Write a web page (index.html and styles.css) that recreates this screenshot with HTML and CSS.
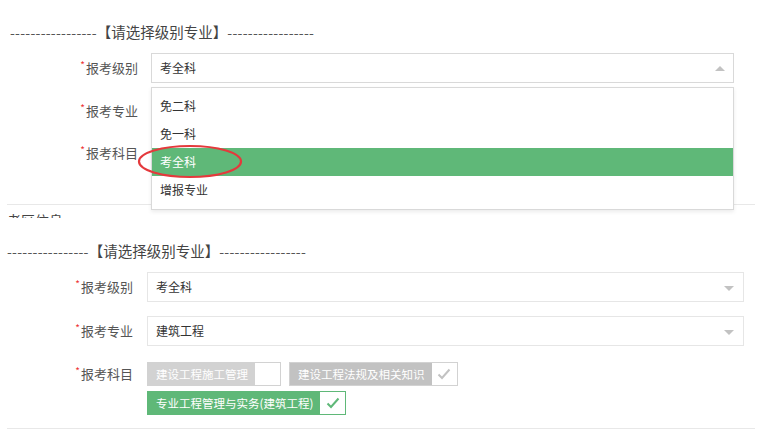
FILE: index.html
```html
<!DOCTYPE html>
<html lang="zh-CN">
<head>
<meta charset="utf-8">
<title>请选择级别专业</title>
<link rel="stylesheet" href="styles.css">
</head>
<body>
<section class="panel panel-top">
  <div class="heading"><span class="dashes">-----------------</span>【请选择级别专业】<span class="dashes">-----------------</span></div>
  <div class="form">
    <div class="row">
      <label class="label"><span class="req">*</span>报考级别</label>
      <div class="select open">
        <span class="value">考全科</span>
        <i class="arrow arrow-up"></i>
        <ul class="menu">
          <li class="option">免二科</li>
          <li class="option">免一科</li>
          <li class="option selected">考全科</li>
          <li class="option">增报专业</li>
          <svg class="mark" width="110" height="36" viewBox="0 0 110 36"><ellipse cx="54" cy="17.5" rx="51" ry="15.5" fill="none" stroke="#e4393c" stroke-width="2.2"/></svg>
        </ul>
      </div>
    </div>
    <div class="row">
      <label class="label"><span class="req">*</span>报考专业</label>
      <div class="select"><span class="value">建筑工程</span><i class="arrow arrow-down"></i></div>
    </div>
    <div class="row row-check">
      <label class="label"><span class="req">*</span>报考科目</label>
      <div class="checks">
        <div class="check-line">
          <div class="cb cb-off"><span class="cb-text">建设工程施工管理</span><span class="cb-box"></span></div>
          <div class="cb cb-dis"><span class="cb-text">建设工程法规及相关知识</span><span class="cb-box"><svg width="14" height="12" viewBox="0 0 14 12"><polyline points="1.5,6.5 5,10 12.5,1.5" fill="none" stroke="currentColor" stroke-width="2"/></svg></span></div>
        </div>
        <div class="check-line">
          <div class="cb cb-on"><span class="cb-text">专业工程管理与实务(建筑工程)</span><span class="cb-box"><svg width="14" height="12" viewBox="0 0 14 12"><polyline points="1.5,6.5 5,10 12.5,1.5" fill="none" stroke="currentColor" stroke-width="2"/></svg></span></div>
        </div>
      </div>
    </div>
  </div>
  <div class="rule"></div>
  <div class="next-title">考区信息</div>
</section>

<section class="panel panel-bottom">
  <div class="heading"><span class="dashes">----------------</span>【请选择级别专业】<span class="dashes">-----------------</span></div>
  <div class="form">
    <div class="row">
      <label class="label"><span class="req">*</span>报考级别</label>
      <div class="select"><span class="value">考全科</span><i class="arrow arrow-down"></i></div>
    </div>
    <div class="row">
      <label class="label"><span class="req">*</span>报考专业</label>
      <div class="select"><span class="value">建筑工程</span><i class="arrow arrow-down"></i></div>
    </div>
    <div class="row row-check">
      <label class="label"><span class="req">*</span>报考科目</label>
      <div class="checks">
        <div class="check-line">
          <div class="cb cb-off"><span class="cb-text">建设工程施工管理</span><span class="cb-box"></span></div>
          <div class="cb cb-dis"><span class="cb-text">建设工程法规及相关知识</span><span class="cb-box"><svg width="14" height="12" viewBox="0 0 14 12"><polyline points="1.5,6.5 5,10 12.5,1.5" fill="none" stroke="currentColor" stroke-width="2"/></svg></span></div>
        </div>
        <div class="check-line">
          <div class="cb cb-on"><span class="cb-text">专业工程管理与实务(建筑工程)</span><span class="cb-box"><svg width="14" height="12" viewBox="0 0 14 12"><polyline points="1.5,6.5 5,10 12.5,1.5" fill="none" stroke="currentColor" stroke-width="2"/></svg></span></div>
        </div>
      </div>
    </div>
  </div>
  <div class="rule"></div>
</section>
</body>
</html>
```

FILE: styles.css
```css
* { box-sizing: border-box; }
html, body { margin: 0; padding: 0; background: #fff; }
body {
  width: 761px;
  height: 446px;
  overflow: hidden;
  font-family: "Noto Sans CJK SC", "Liberation Sans", sans-serif;
  color: #333;
}
ul { margin: 0; padding: 0; list-style: none; }

.panel { position: relative; }
.panel-top { height: 218px; overflow: hidden; padding-top: 22px; }
.panel-bottom { padding-top: 23px; }

.heading {
  height: 20px;
  font-size: 14.5px;
  line-height: 20px;
  color: #444;
  white-space: nowrap;
}
.panel-top .heading { padding-left: 10px; }
.panel-bottom .heading { padding-left: 7px; }
.dashes { font-size: 14px; letter-spacing: 0.25px; color: #555; }

.form { display: flex; flex-direction: column; margin-top: 11px; }
.panel-top .form { gap: 13px; }
.panel-bottom .form { gap: 14px; margin-top: 11px; }

.row { display: grid; align-items: start; }
.panel-top .row { grid-template-columns: 138px 583px; column-gap: 13px; }
.panel-bottom .row { grid-template-columns: 133px 597px; column-gap: 14px; }
.panel-top .row-check { margin-top: 2px; }
.panel-bottom .row-check { margin-top: 2px; }

.label {
  display: flex;
  justify-content: flex-end;
  align-items: center;
  height: 30px;
  font-size: 13px;
  line-height: 16px;
  color: #555;
  white-space: nowrap;
}
.row-check .label { height: 24px; }
.req {
  color: #e33;
  font-size: 10px;
  line-height: 10px;
  position: relative;
  top: -3px;
  margin-right: 1px;
}

.select {
  position: relative;
  height: 30px;
  border: 1px solid #e6e6e6;
  background: #fff;
  padding-left: 8px;
  font-size: 12px;
  line-height: 28px;
  color: #333;
}
.select.open { border-color: #d9d9d9; }
.arrow {
  position: absolute;
  right: 8px;
  width: 0;
  height: 0;
  border-left: 5px solid transparent;
  border-right: 5px solid transparent;
}
.arrow-up { top: 12px; border-bottom: 5px solid #c2c2c2; }
.arrow-down { top: 13px; border-top: 5px solid #c2c2c2; }
.panel-bottom .arrow { right: 9px; }

.menu {
  position: absolute;
  top: 33px;
  left: -1px;
  right: -1px;
  height: 123px;
  border: 1px solid #d9d9d9;
  background: #fff;
  padding: 4px 0 5px;
  box-shadow: 0 2px 4px rgba(0,0,0,0.08);
  z-index: 5;
}
.option {
  height: 28px;
  line-height: 28px;
  padding-left: 8px;
  font-size: 12px;
  color: #333;
}
.option.selected { background: #5fb878; color: #fff; }
.mark { position: absolute; left: -16px; top: 56px; overflow: visible; }

.checks { display: flex; flex-direction: column; gap: 5px; }
.check-line { display: flex; gap: 8px; }
.cb {
  display: inline-flex;
  height: 24px;
  border: 1px solid #d2d2d2;
  background: #fff;
}
.cb-text {
  padding: 0 7px 0 8px;
  font-size: 11.5px;
  line-height: 22px;
  color: #fff;
  white-space: nowrap;
}
.cb-box {
  width: 25px;
  display: flex;
  align-items: center;
  justify-content: center;
  background: #fff;
}
.cb-off .cb-text { background: #d2d2d2; }
.cb-dis .cb-text { background: #c2c2c2; }
.cb-dis .cb-box { color: #c2c2c2; }
.cb-on { border-color: #5fb878; }
.cb-on .cb-text { background: #5fb878; }
.cb-on .cb-box { color: #5fb878; }

.rule { height: 1px; background: #e8e8e8; margin-left: 7px; width: 748px; }
.panel-top .rule { margin-top: 10px; }
.panel-bottom .rule { margin-top: 13px; }
.next-title {
  margin-top: 5px;
  padding-left: 7px;
  font-size: 14px;
  line-height: 20px;
  color: #444;
}
```
